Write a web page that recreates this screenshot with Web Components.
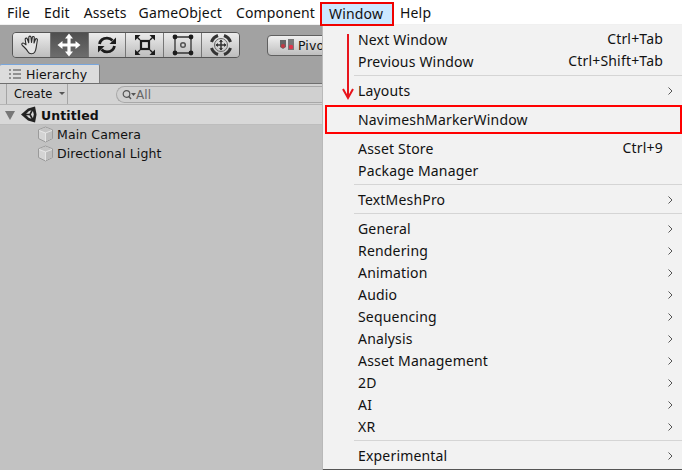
<!DOCTYPE html>
<html><head><meta charset="utf-8">
<style>
html,body{margin:0;padding:0;width:682px;height:470px;overflow:hidden;background:#c2c2c2}
body{position:relative;display:flex;flex-direction:column}
</style></head>
<body>
<u-menubar>
  <u-menubar-item>File</u-menubar-item><u-menubar-item style="margin-left:14px">Edit</u-menubar-item><u-menubar-item style="margin-left:14px">Assets</u-menubar-item><u-menubar-item style="margin-left:12px">GameObject</u-menubar-item><u-menubar-item style="margin-left:14px">Component</u-menubar-item><u-menubar-item active style="margin-left:5px">Window</u-menubar-item><u-menubar-item style="margin-left:6px">Help</u-menubar-item>
</u-menubar>
<u-toolbar></u-toolbar>
<u-hierarchy>
  <u-tree-row icon>Main Camera</u-tree-row>
  <u-tree-row icon>Directional Light</u-tree-row>
</u-hierarchy>
<u-menu>
  <u-item shortcut="Ctrl+Tab">Next Window</u-item>
  <u-item shortcut="Ctrl+Shift+Tab">Previous Window</u-item>
  <u-sep></u-sep>
  <u-item sub>Layouts</u-item>
  <u-sep hidden-line></u-sep>
  <u-item marked>NavimeshMarkerWindow</u-item>
  <u-sep hidden-line></u-sep>
  <u-item shortcut="Ctrl+9">Asset Store</u-item>
  <u-item>Package Manager</u-item>
  <u-sep></u-sep>
  <u-item sub>TextMeshPro</u-item>
  <u-sep></u-sep>
  <u-item sub>General</u-item>
  <u-item sub>Rendering</u-item>
  <u-item sub>Animation</u-item>
  <u-item sub>Audio</u-item>
  <u-item sub>Sequencing</u-item>
  <u-item sub>Analysis</u-item>
  <u-item sub>Asset Management</u-item>
  <u-item sub>2D</u-item>
  <u-item sub>AI</u-item>
  <u-item sub>XR</u-item>
  <u-sep></u-sep>
  <u-item sub>Experimental</u-item>
</u-menu>
<script>
function def(name, css, html, init){
  customElements.define(name, class extends HTMLElement{
    constructor(){super();const r=this.attachShadow({mode:'open'});r.innerHTML='<style>'+css+'</style>'+(typeof html==='function'?html(this):html);}
    connectedCallback(){ if(init) init(this); }
  });
}
const MENU_FONT='"Noto Sans","Open Sans",sans-serif';
const UNITY_FONT='"DejaVu Sans",sans-serif';

def('u-menubar',`:host{display:flex;align-items:center;box-sizing:border-box;height:25px;padding:0 0 0 7px;background:#fff;border-bottom:1px solid #f0f0f0;font:14px ${MENU_FONT};letter-spacing:.15px;color:#111;flex:none}`,'<slot></slot>');
def('u-menubar-item',`:host{display:block;line-height:19px;margin-top:1px}
:host([active]){box-sizing:border-box;height:24px;width:74px;margin-top:4px;padding:0 0 0 7px;line-height:19px;background:#cce8ff;border:2px solid #f00200;position:relative;z-index:3}`,'<slot></slot>');

const ICONS={
hand:`<path d="M8.800 18.500C7.500 16 5.500 14.500 3.300 12.300 2 11 3.500 9.400 5 10.400L7 11.800 6.200 6.500C6 5 8 4.600 8.400 6L9.700 9.800 9.800 4.200C9.800 2.800 11.900 2.800 12 4.200L12.500 9.500 13.300 4.300C13.500 3 15.400 3.300 15.300 4.600L15 10 16.500 6.300C17 5.100 18.700 5.700 18.400 7L17.500 12.500C17 15.500 17 17 15.800 19 14.300 21.500 10.400 21.500 8.800 18.500Z" fill="#e4e4e4" stroke="#2c2c2c" stroke-width="1.100" stroke-linejoin="round"/>`,
move:`<path fill="#fff" d="M12 0.500 16 5.500H13.600V10.400H18.500V8L23.500 12 18.500 16V13.600H13.600V18.500H16L12 23.500 8 18.500H10.400V13.600H5.500V16L.5 12 5.500 8V10.400H10.400V5.500H8Z"/>`,
rotate:`<g fill="none" stroke="#1c1c1c" stroke-width="2.800"><path d="M4.500 11c.8-3.800 3.800-5.800 7.500-5.800 2.300 0 4.200.9 5.500 2.300"/><path d="M19.500 13c-.8 3.800-3.800 5.800-7.500 5.800-2.300 0-4.200-.9-5.500-2.300"/></g><path d="M21 4.500v6.500h-6.500z" fill="#1c1c1c"/><path d="M3 19.500v-6.500h6.500z" fill="#1c1c1c"/>`,
scale:`<rect x="8" y="8" width="8" height="8" fill="#ddd" stroke="#1c1c1c" stroke-width="2.200"/><g fill="#1c1c1c"><path d="M2 2h5.500L2 7.500z"/><path d="M22 2h-5.500L22 7.500z"/><path d="M2 22h5.500L2 16.500z"/><path d="M22 22h-5.500L22 16.500z"/></g><path d="M3 3 7 7M21 3 17 7M3 21 7 17M21 21 17 17" stroke="#1c1c1c" stroke-width="1.400"/>`,
rect:`<path d="M4 4H20V20H4Z" fill="none" stroke="#333" stroke-width="1.300"/><g fill="#1c1c1c"><circle cx="4" cy="4" r="2.400"/><circle cx="20" cy="4" r="2.400"/><circle cx="4" cy="20" r="2.400"/><circle cx="20" cy="20" r="2.400"/></g><circle cx="12" cy="12" r="2.300" fill="none" stroke="#555" stroke-width="1.500"/>`,
all:`<g fill="none" stroke="#333" stroke-width="3"><path d="M2.500 9A10.500 10.500 0 0 1 9 2.500"/><path d="M15 2.500A10.500 10.500 0 0 1 21.500 9"/><path d="M21.500 15A10.500 10.500 0 0 1 15 21.500"/><path d="M9 21.500A10.500 10.500 0 0 1 2.500 15"/></g><circle cx="12" cy="12" r="6.500" fill="none" stroke="#666" stroke-width="1"/><path d="M12 7 12 17M7 12 17 12" stroke="#333" stroke-width="1.500"/><path d="M12 6.500 14 9H10ZM12 17.500 14 15H10ZM6.500 12 9 10V14ZM17.500 12 15 10V14Z" fill="#333"/>`
};
def('u-tool',`:host{display:flex;align-items:center;justify-content:center;flex:1;height:100%;box-sizing:border-box;border-right:1px solid #767676;background:linear-gradient(#ececec,#bdbdbd)}
:host(:last-child){border-right:0}
:host([on]){background:linear-gradient(#4f4f4f,#6d6d6d)}
svg{width:24px;height:24px;display:block}`,h=>`<svg viewBox="0 0 24 24">${ICONS[h.getAttribute('icon')]}</svg>`);

def('u-toolbar',`:host{display:flex;align-items:center;box-sizing:border-box;height:39px;padding:0 0 0 12px;background:#a2a2a2;flex:none;gap:27px}
.grp{display:flex;width:228px;height:26px;box-sizing:border-box;border:1px solid #555;border-radius:4px;overflow:hidden;margin-top:1px}
.pivot{display:flex;align-items:center;gap:4px;width:90px;height:21px;box-sizing:border-box;border:1px solid #606060;border-radius:4px;background:linear-gradient(#f0f0f0,#bebebe);padding-left:12px;font:12.500px ${UNITY_FONT};letter-spacing:.1px;color:#111;margin-top:1px}
svg{display:block}`,`<div class="grp"><u-tool icon="hand"></u-tool><u-tool icon="move" on></u-tool><u-tool icon="rotate"></u-tool><u-tool icon="scale"></u-tool><u-tool icon="rect"></u-tool><u-tool icon="all"></u-tool></div>
<div class="pivot"><svg width="14" height="12" viewBox="0 0 14 12"><path d="M0 1h6v7l-3 2-3-2z" fill="#666"/><path d="M8 0h6v11H8z" fill="#777"/><circle cx="3" cy="7" r="2" fill="#c23a44"/><circle cx="11" cy="8" r="2.200" fill="#e0344a"/></svg><span>Pivot</span></div>`);

def('u-hierarchy',`:host{display:flex;flex-direction:column;flex:1;background:#c2c2c2;font:12.500px ${UNITY_FONT};letter-spacing:.1px;color:#111}
.tabs{display:flex;height:20px;box-sizing:border-box;background:#a2a2a2;border-bottom:1px solid #6f6f6f}
.tab{display:flex;align-items:center;gap:5px;width:100px;height:19px;box-sizing:border-box;padding-left:9px;background:#dcdcdc;border-top:1px solid #78a6dd;border-right:1px solid #7d7d7d;border-radius:2px 2px 0 0}
.bar{display:flex;align-items:stretch;height:21px;box-sizing:border-box;background:#d3d3d3;border-bottom:1px solid #b5b5b5;padding-left:6px}
.create{display:flex;align-items:center;width:62px;box-sizing:border-box;border:solid #a5a5a5;border-width:0 1px;padding-left:7px;font-size:11.500px;letter-spacing:0;position:relative}
.create i{position:absolute;left:52px;top:8px;border:3px solid transparent;border-top:3px solid #555;border-bottom:0}
.search{display:flex;align-items:center;margin:2px 0 1px 48px;flex:1;border:1px solid #a8a8a8;border-right:0;border-radius:9px 0 0 9px;padding-left:5px;font-size:12px;color:#666;background:#d0d0d0;gap:0}
.root{display:flex;align-items:center;height:20px;box-sizing:border-box;background:#d8d8d8;border-bottom:1px solid #bdbdbd;font-weight:700;color:#111}
.root span:last-child{padding-top:1px}
.tri{width:0;height:0;margin:1px 0 0 5px;border:5px solid transparent;border-top:9px solid #777;border-bottom:0}
.logo{margin:0 4px 0 5px}
svg{display:block;flex:none}`,`<div class="tabs"><div class="tab"><svg width="12" height="10" viewBox="0 0 12 10"><path d="M0 1h2M0 5h2M0 9h2M4 1h8M4 5h8M4 9h8" stroke="#444" stroke-width="1.200" fill="none"/></svg><span>Hierarchy</span></div></div>
<div class="bar"><div class="create">Create<i></i></div><div class="search"><svg width="14" height="12" viewBox="0 0 14 12"><circle cx="4.500" cy="5" r="3.300" fill="none" stroke="#555" stroke-width="1.200"/><path d="M7 7.500 9 10" stroke="#555" stroke-width="1.400"/><path d="M9 4h5l-2.500 3z" fill="#555"/></svg><span>All</span></div></div>
<div class="root"><span class="tri"></span><svg class="logo" width="17" height="17" viewBox="0 0 17 17"><path d="M15 .5 16.500 8.500 15 16.500 8 14.500 1 8.500 8 2.500Z" fill="#222"/><path d="M9 5 12.700 4 13.800 8.500 12.700 13 9 12 5.500 8.500Z" fill="#d8d8d8"/><path d="M3.500 8.500H10L12.700 3.500M10 8.500 12.700 13.500" stroke="#222" stroke-width="1.600" fill="none"/></svg><span>Untitled</span></div>
<div><slot></slot></div>`);

def('u-tree-row',`:host{display:flex;align-items:center;height:19px;padding-left:37px;gap:3px}
svg{display:block}`,`<svg width="17" height="17" viewBox="0 0 17 17"><path d="M8.500 1 15.500 3.800V12.500L8.500 16 1.500 12.500V3.800Z" fill="#d4d4d4" stroke="#9a9a9a" stroke-width="1"/><path d="M2 4 8.500 6.800 15 4 8.500 1.500Z" fill="#c4c4c4"/><path d="M8.500 7V15.500L15 12.200V4.300Z" fill="#bdbdbd"/><path d="M2 4.500 8.500 7 15 4.500M8.500 7V15.500" stroke="#ececec" stroke-width=".8" fill="none"/></svg><span><slot></slot></span>`);

def('u-menu',`:host{position:absolute;left:323px;top:25px;width:359px;height:444px;box-sizing:border-box;padding:4px 0 0 1px;background:#f2f2f2;font:14px ${MENU_FONT};letter-spacing:.18px;color:#111;display:block;box-shadow:-1px 0 0 #b9b9b9,0 1px 1px #555;z-index:2}
.arrow{position:absolute;left:19px;top:8px}`,`<slot></slot><svg class="arrow" width="12" height="68" viewBox="0 0 12 68"><path d="M6 1V63" stroke="#e8141c" stroke-width="2" fill="none"/><path d="M1 56 6 65 11 56" stroke="#e8141c" stroke-width="2" fill="none"/></svg>`);

def('u-item',`:host{display:flex;align-items:center;height:22px;padding:0 0 2px 34px;box-sizing:border-box;position:relative;white-space:nowrap}
.s{position:absolute;right:19px;top:-1px;line-height:22px}
.c{position:absolute;right:9px;top:7px}
:host([marked])::after{content:"";position:absolute;left:1px;right:0;top:-4px;bottom:-3px;border:2px solid #f00;box-sizing:border-box}`,
h=>`<slot></slot>${h.hasAttribute('shortcut')?`<span class="s">${h.getAttribute('shortcut')}</span>`:''}${h.hasAttribute('sub')?`<svg class="c" width="5" height="8" viewBox="0 0 5 8"><path d="M.5.500 4 4 .5 7.500" stroke="#555" fill="none"/></svg>`:''}`);

def('u-sep',`:host{display:block;height:7px;box-sizing:border-box;padding:2px 0 0 30px}
div{height:1px;background:#d5d5d5;margin-top:0}
:host([hidden-line]) div{background:transparent}`,'<div></div>');
</script>
</body></html>
